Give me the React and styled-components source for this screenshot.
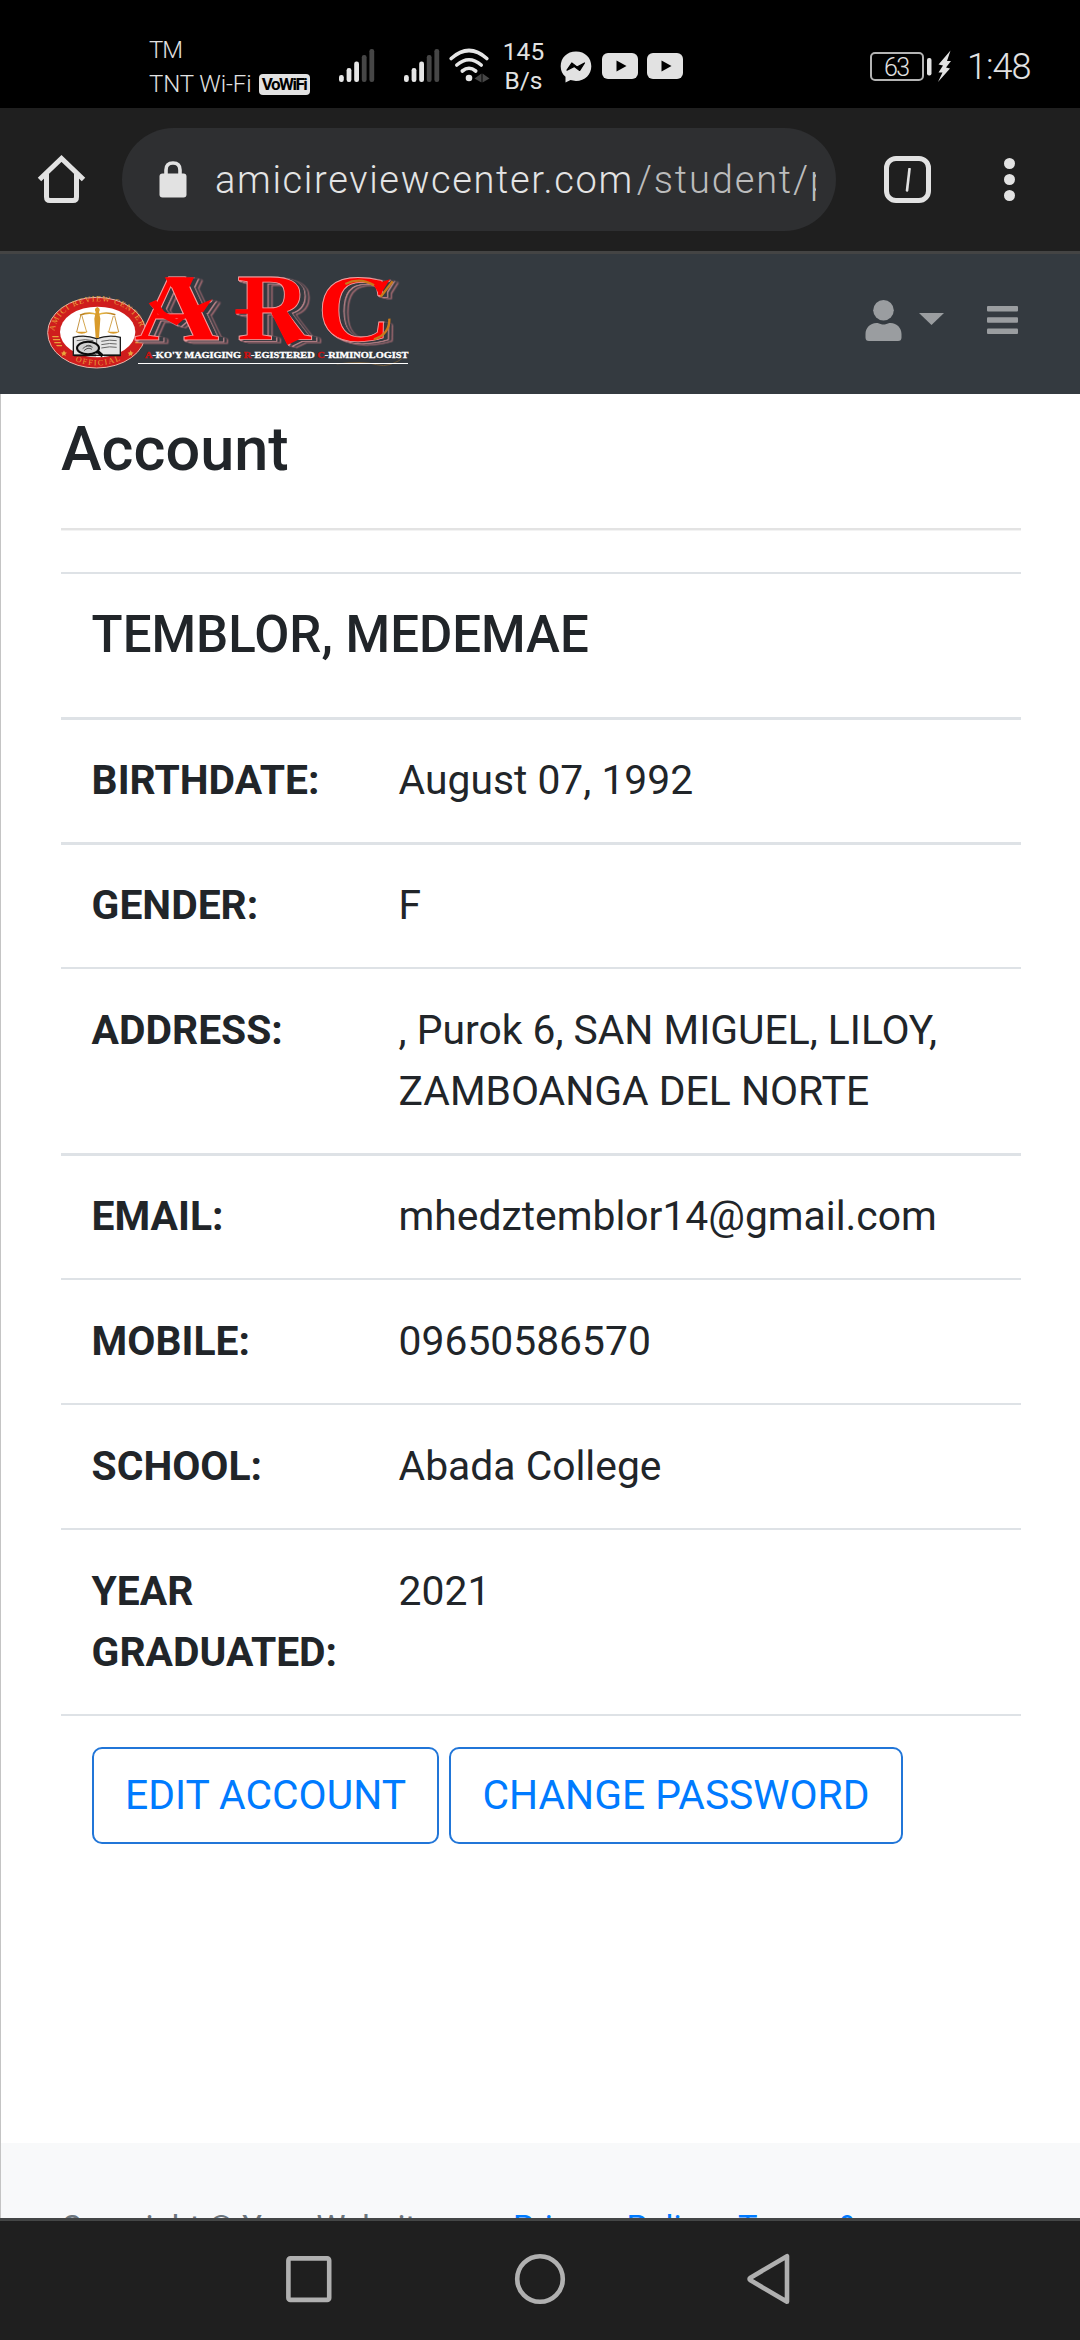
import React from "react";
import styled, { createGlobalStyle } from "styled-components";

const GlobalStyle = createGlobalStyle`
  *, *::before, *::after { box-sizing: border-box; }
  html, body { margin: 0; padding: 0; background: #fff; }
  body { font-family: Roboto, "Noto Sans", sans-serif; color: #212529; }
  h1, h2, p, dl, dt, dd { margin: 0; }
  svg { display: block; flex: none; }
`;

const Screen = styled.div`
  width: 1080px;
  height: 2340px;
  overflow: hidden;
  display: flex;
  flex-direction: column;
`;

/* Status bar */
const StatusBar = styled.div`
  flex: none;
  height: 108px;
  background: #000;
  color: #e2e2e2;
  display: flex;
  align-items: flex-start;
  padding: 33px 48px 0 149px;
`;
const Carriers = styled.div`
  width: 190px;
  font-size: 24px;
  font-weight: 300;
  line-height: 34px;
  white-space: nowrap;
`;
const CarrierLine = styled.div`
  display: flex;
  align-items: center;
  letter-spacing: ${(p) => p.$spacing}px;
`;
const VoBadge = styled.span`
  display: flex;
  align-items: center;
  justify-content: center;
  width: 51px;
  height: 21px;
  margin-left: 7px;
  border-radius: 4px;
  background: #e2e2e2;
  color: #000;
  font-size: 17px;
  font-weight: 700;
  line-height: 21px;
  letter-spacing: -1.5px;
`;
const StatusIcon = styled.svg`
  margin-top: ${(p) => p.$top}px;
  margin-left: ${(p) => p.$left || 0}px;
`;
const Speed = styled.div`
  width: 54px;
  margin-left: 7px;
  margin-right: 1px;
  margin-top: 5px;
  font-size: 24.5px;
  line-height: 28.5px;
  text-align: center;
`;
const Clock = styled.div`
  margin-left: 15px;
  margin-top: 14px;
  font-size: 36px;
  font-weight: 300;
  line-height: 40px;
  width: 65px;
  letter-spacing: -1px;
  white-space: nowrap;
`;
const Push = styled.div`
  flex: 1;
`;

/* Browser toolbar */
const Toolbar = styled.div`
  flex: none;
  height: 146px;
  background: #1f1f1f;
  border-bottom: 3px solid #444;
  display: flex;
  align-items: center;
  padding: 0 0 0 37px;
`;
const Omnibox = styled.div`
  width: 714px;
  height: 103px;
  margin-left: 36px;
  border-radius: 52px;
  background: #2e2f31;
  display: flex;
  align-items: center;
  padding-left: 37px;
`;
const Url = styled.div`
  width: 601px;
  margin-left: 28px;
  overflow: hidden;
  white-space: nowrap;
  font-size: 38px;
  font-weight: 300;
  line-height: 54px;
  color: #e4e4e4;
  letter-spacing: 1.66px;
`;
const UrlPath = styled.span`
  color: #bcbcbc;
  margin-left: 3px;
  letter-spacing: 1.85px;
`;
const TabCount = styled.div`
  width: 47px;
  height: 47px;
  margin-left: 48px;
  border: 5px solid #e2e2e2;
  border-radius: 12px;
  color: #e2e2e2;
  display: flex;
  align-items: center;
  justify-content: center;
`;
const Dots = styled.div`
  margin-left: 73px;
  display: flex;
  flex-direction: column;
  gap: 4.6px;
`;
const Dot = styled.span`
  width: 11px;
  height: 11px;
  border-radius: 50%;
  background: #e2e2e2;
`;

/* Site header */
const SiteHeader = styled.header`
  flex: none;
  height: 140px;
  background: #343a40;
  display: flex;
  align-items: flex-start;
  padding: 16px 62px 0 44px;
`;
const HeaderIcon = styled.svg`
  fill: #9a9da0;
  margin-top: ${(p) => p.$top}px;
  margin-left: ${(p) => p.$left || 0}px;
`;
const LogoArt = styled.svg`
  overflow: visible;
  font-family: "Liberation Serif", serif;
`;
/* Letter face with two thin offset contours to its right. */
const LetterFace = styled.g`
  fill: #f00;
  stroke: #f3a0a0;
  stroke-width: 2.5;
  font-weight: 700;
  font-size: 284px;
  filter: drop-shadow(13px 3px 0 #343a40) drop-shadow(3px 2px 0 #e59aa0)
    drop-shadow(8px 2px 0 #343a40) drop-shadow(3px 2px 0 #c97a82);
`;

/* Page */
const Page = styled.main`
  flex: none;
  height: 1824px;
  overflow: hidden;
  border-left: 1px solid #c4c4c4;
  background: #fff;
  display: flex;
  flex-direction: column;
`;
const Content = styled.section`
  flex: none;
  height: 1749px;
  padding: 19.4px 59px 0 60px;
`;
const Title = styled.h1`
  font-size: 61.2px;
  font-weight: 500;
  line-height: 73.6px;
`;
const Rule = styled.hr`
  height: 3px;
  margin: 41px 0;
  border: 0;
  border-top: 2px solid #e3e3e3;
  background: #f3f3f3;
`;
const NameRow = styled.h2`
  height: 145px;
  border-top: 2px solid #dee2e6;
  padding: 30px 30.6px;
  font-size: 51px;
  font-weight: 500;
  line-height: 61px;
`;
const Row = styled.dl`
  display: grid;
  grid-template-columns: 307px 1fr;
  border-top: ${(p) => (p.$thick ? 3 : 2)}px solid #dee2e6;
  padding: ${(p) => (p.$thick ? 30 : 31)}px 0 31px;
  font-size: 40.8px;
  line-height: 61px;
`;
const Label = styled.dt`
  padding: 0 30.6px;
  font-weight: 700;
`;
const Value = styled.dd`
  padding: 0 30.6px;
`;
const Actions = styled.div`
  border-top: 2px solid #dee2e6;
  padding: 31px 31px;
  display: flex;
  gap: 10px;
`;
const OutlineButton = styled.button`
  width: ${(p) => p.$width}px;
  height: 97px;
  padding: 0;
  border: 2px solid #2176d8;
  border-radius: 10px;
  background: transparent;
  color: #007bff;
  font-family: inherit;
  font-size: 40.8px;
  line-height: 61px;
  white-space: nowrap;
`;
const Footer = styled.footer`
  flex: 1;
  background: #f8f9fa;
  padding: 61px 60px 0 60px;
  display: flex;
  font-size: 32.64px;
  line-height: 49px;
  color: #6c757d;
  white-space: nowrap;
  overflow: hidden;
`;
const Copyright = styled.div`
  width: 452px;
`;
const FooterLink = styled.a`
  color: #007bff;
`;

/* System navigation */
const NavBar = styled.nav`
  flex: 1;
  border-top: 3px solid #444646;
  background: #1f1f1f;
  display: flex;
  align-items: flex-start;
  padding: 32px 0 0 283px;
`;
const NavIcon = styled.svg`
  fill: none;
  stroke: #b0b0b0;
  stroke-width: 4.6;
  stroke-linejoin: round;
  margin-left: ${(p) => p.$left || 0}px;
`;

function Signal({ left }) {
  const tops = [26, 19, 12.5, 6, 0];
  return (
    <StatusIcon $top={16} $left={left} width="36" height="34">
      {tops.map((t, i) => (
        <rect key={i} x={i * 7.6} y={t} width="4.8" height={33 - t} rx="2.2" fill={i < 3 ? "#e6e6e6" : "#464646"} />
      ))}
    </StatusIcon>
  );
}

function YouTube({ left }) {
  return (
    <StatusIcon $top={20} $left={left} width="36" height="26" viewBox="0 0 36 26">
      <rect width="36" height="26" rx="6" fill="#e2e2e2" />
      <path d="M14.5 7.5 24.5 13 14.5 18.5Z" fill="#000" />
    </StatusIcon>
  );
}

function Logo() {
  return (
    <LogoArt width="375" height="100" viewBox="42 60 1125 300">
      <defs>
        <path id="sealTop" d="M72 262C72 118 334 118 334 262" />
        <path id="sealBottom" d="M112 322Q204 372 296 318" />
        <linearGradient id="gold" x1="0" x2="1">
          <stop offset="0" stopColor="#b5791a" />
          <stop offset=".5" stopColor="#f1c34a" />
          <stop offset="1" stopColor="#b5791a" />
        </linearGradient>
      </defs>
      <ellipse cx="200" cy="248" rx="147" ry="106" fill="#cf1d1d" stroke="#e9b4a8" strokeWidth="3" />
      <ellipse cx="203" cy="246" rx="113" ry="76" fill="#fff" />
      <text fontSize="24" fill="#e8a33c">
        <textPath href="#sealTop" startOffset="18" textLength="330">AMICI REVIEW CENTER</textPath>
      </text>
      <text fontSize="24" fill="#e8a33c">
        <textPath href="#sealBottom" startOffset="26" textLength="140">OFFICIAL</textPath>
      </text>
      <g fill="#e8a33c">
        <path d="M102 301l3 6 6 1-5 4 1 6-5-3-6 3 1-6-4-4 6-1zM302 301l3 6 6 1-5 4 1 6-5-3-6 3 1-6-4-4 6-1z" />
        <path d="M66 258h20v4H68zM68 267h22v4H70zM72 276h20v4H74zM78 285h18v4H81zM320 267h18v4h-19zM316 276h20v4h-20z" />
      </g>
      <path d="M130 262q36-9 70 4q36-13 71-4v54h-141z" fill="#e5e5e5" stroke="#1c1c1c" strokeWidth="4" />
      <path d="M200 266v47M214 274q26-6 46-2M214 284q26-6 46-2M214 294q26-6 46-2M140 272q26-6 50 0" fill="none" stroke="#666" strokeWidth="3" />
      <path d="M132 316h66M222 316h50" stroke="#111" strokeWidth="5" />
      <ellipse cx="174" cy="294" rx="33" ry="19" fill="#d0d0d0" stroke="#0b0b0b" strokeWidth="6" />
      <path d="M158 296q14-14 30-4M162 302q12-12 24-4M168 288q8-4 16 0" fill="none" stroke="#555" strokeWidth="3" />
      <path d="M202 304l16 14" stroke="#0b0b0b" strokeWidth="10" />
      <g fill="none" stroke="url(#gold)" strokeWidth="5">
        <path d="M150 196q26-12 52-2q26-10 54 0" />
        <path d="M152 198l-12 48M156 198l14 48M250 198l-14 48M254 198l12 48" strokeWidth="2.5" />
      </g>
      <path d="M197 186q-6-10 5-15q11 5 5 15l4 20-4 58h-10l-4-58z" fill="#d99b2b" />
      <path d="M136 245h38q-19 12-38 0zM231 245h38q-19 12-38 0z" fill="#d99b2b" />
      <LetterFace>
        <text x="312" y="271" textLength="256" lengthAdjust="spacingAndGlyphs">A</text>
        <path d="M404 82H492L478 112H424Z" stroke="none" />
        <path d="M356 160L378 150L402 184L440 208L498 168L546 148L520 186L480 192L440 226L392 200Z" stroke="none" />
      </LetterFace>
      <LetterFace>
        <text x="620" y="271" textLength="222" lengthAdjust="spacingAndGlyphs">R</text>
        <path d="M616 178H656V191H616ZM724 190L770 182L820 262L772 285Z" stroke="none" />
      </LetterFace>
      <LetterFace>
        <text x="862" y="272" textLength="222" lengthAdjust="spacingAndGlyphs">C</text>
        <path d="M1030 104L1080 88L1050 136Z" stroke="none" />
      </LetterFace>
      <path d="M946 102q44-22 86 4M1052 140l36-46M1078 206q2 46-46 62" fill="none" stroke="#c87a1c" strokeWidth="7" />
      <path d="M920 342q80-10 120 2t90-28" fill="none" stroke="#8a6a3c" strokeWidth="3" opacity=".7" />
      <text x="345" y="325" textLength="790" lengthAdjust="spacingAndGlyphs" fontWeight="700" fontSize="27" fill="#fff" stroke="#fff" strokeWidth="1">
        <tspan fill="#d01010" stroke="#d01010">A</tspan>-KO'Y MAGIGING <tspan fill="#d01010" stroke="#d01010">R</tspan>-EGISTERED <tspan fill="#d01010" stroke="#d01010">C</tspan>-RIMINOLOGIST
      </text>
      <path d="M324 340.5H1134" stroke="#fff" strokeWidth="3.5" />
    </LogoArt>
  );
}

const details = [
  { label: "BIRTHDATE:", value: "August 07, 1992", thick: true },
  { label: "GENDER:", value: "F", thick: true },
  { label: "ADDRESS:", value: ", Purok 6, SAN MIGUEL, LILOY, ZAMBOANGA DEL NORTE" },
  { label: "EMAIL:", value: "mhedztemblor14@gmail.com", thick: true },
  { label: "MOBILE:", value: "09650586570" },
  { label: "SCHOOL:", value: "Abada College" },
  { label: "YEAR GRADUATED:", value: "2021" },
];

export default function App() {
  return (
    <Screen>
      <GlobalStyle />
      <StatusBar>
        <Carriers>
          <CarrierLine $spacing={-1}>TM</CarrierLine>
          <CarrierLine $spacing={-0.1}>
            TNT Wi-Fi<VoBadge>VoWiFi</VoBadge>
          </CarrierLine>
        </Carriers>
        <Signal />
        <Signal left={28.5} />
        <StatusIcon $top={15} $left={9} width="41" height="35" viewBox="0 0 41 35">
          <g fill="none" stroke="#e6e6e6" strokeWidth="3.6" strokeLinecap="round">
            <path d="M2.2 10.5Q20 -5.5 37.8 10.5" />
            <path d="M7.8 17Q20 6.5 32.2 17" />
            <path d="M13.3 23Q20 17.5 26.7 23" />
          </g>
          <circle cx="20" cy="30" r="3.3" fill="#e6e6e6" />
          <path d="M25.5 30.5l7-5v9zM33.5 25.5v9l7-4z" fill="#464646" />
        </StatusIcon>
        <Speed>145 B/s</Speed>
        <StatusIcon $top={18} $left={8} width="32" height="32" viewBox="0 0 32 32">
          <path d="M16 .5C7 .5.7 6.800.7 15.200c0 4.400 1.700 8 4.800 10.600V31.500l5-2.400c1.700.5 3.500.8 5.500.8 9 0 15.300-6.300 15.300-14.700S25 .5 16 .5Z" fill="#e2e2e2" />
          <path d="M7 19.200l4.800-7.200 5.200 4 7.500-4-4.800 7.400-5.400-4z" fill="#000" stroke="#000" strokeWidth="1.200" strokeLinejoin="round" />
        </StatusIcon>
        <YouTube left={10} />
        <YouTube left={9} />
        <Push />
        <StatusIcon $top={17} width="83" height="34" viewBox="0 0 83 34">
          <rect x="2" y="3" width="52" height="27" rx="4" fill="none" stroke="#b4b4b4" strokeWidth="2" />
          <text x="15" y="25.500" fontFamily="Roboto, sans-serif" fontWeight="300" fontSize="25" fill="#e2e2e2" textLength="26">63</text>
          <rect x="58" y="8" width="4.500" height="17.500" rx="2" fill="#e2e2e2" />
          <path d="M81.500 0.500L69.500 14.500l4.500 1-4.500 7h4l-4.500 9.500L81 18.500l-4-1 5-6.500h-4z" fill="#e2e2e2" />
        </StatusIcon>
        <Clock>1:48</Clock>
      </StatusBar>

      <Toolbar>
        <svg width="49" height="49" viewBox="0 0 49 49">
          <path d="M2.500 24.500 24.500 3.500 46.500 24.500M9.500 19V42Q9.500 45.500 13 45.500H36Q39.500 45.500 39.500 42V19" fill="none" stroke="#e2e2e2" strokeWidth="5" />
        </svg>
        <Omnibox>
          <svg width="28" height="37" viewBox="0 0 28 37">
            <rect x="0.500" y="12.500" width="27" height="24" rx="3" fill="#e2e2e2" />
            <path d="M7 13V9Q7 2 14 2T21 9V13" fill="none" stroke="#e2e2e2" strokeWidth="3.600" />
          </svg>
          <Url>
            amicireviewcenter.com<UrlPath>/student/p</UrlPath>
          </Url>
        </Omnibox>
        <TabCount>
          <svg width="6" height="24" viewBox="0 0 6 24">
            <path d="M4.500 1 2 22.500" stroke="#e2e2e2" strokeWidth="2.600" strokeLinecap="round" />
          </svg>
        </TabCount>
        <Dots>
          <Dot />
          <Dot />
          <Dot />
        </Dots>
      </Toolbar>

      <SiteHeader>
        <Logo />
        <Push />
        <HeaderIcon $top={30} width="37" height="41" viewBox="0 0 37 41">
          <circle cx="18.500" cy="10.300" r="10.300" />
          <path d="M11.500 23C14.500 23 15 24.500 18.500 24.500S22.500 23 25.500 23C32 23 36.500 28 36.500 34V37.500Q36.500 41 33 41H4Q.5 41 .5 37.500V34C.5 28 5 23 11.500 23Z" />
        </HeaderIcon>
        <HeaderIcon $top={43} $left={17} width="25" height="12" viewBox="0 0 25 12">
          <path d="M0 0H25L12.500 12Z" />
        </HeaderIcon>
        <HeaderIcon $top={36} $left={43} width="31" height="28" viewBox="0 0 31 28">
          <rect width="31" height="5.500" rx="1" />
          <rect y="11.200" width="31" height="5.500" rx="1" />
          <rect y="22.400" width="31" height="5.500" rx="1" />
        </HeaderIcon>
      </SiteHeader>

      <Page>
        <Content>
          <Title>Account</Title>
          <Rule />
          <NameRow>TEMBLOR, MEDEMAE</NameRow>
          {details.map((d) => (
            <Row key={d.label} $thick={d.thick}>
              <Label>{d.label}</Label>
              <Value>{d.value}</Value>
            </Row>
          ))}
          <Actions>
            <OutlineButton $width={347}>EDIT ACCOUNT</OutlineButton>
            <OutlineButton $width={454}>CHANGE PASSWORD</OutlineButton>
          </Actions>
        </Content>
        <Footer>
          <Copyright>Copyright © Your Website</Copyright>
          <div>
            <FooterLink>Privacy Policy</FooterLink> · <FooterLink>Terms &amp;</FooterLink>
          </div>
        </Footer>
      </Page>

      <NavBar>
        <NavIcon width="52" height="52" viewBox="0 0 52 52">
          <rect x="5.400" y="5.400" width="40.800" height="41.500" rx="2" />
        </NavIcon>
        <NavIcon $left={179} width="52" height="52" viewBox="0 0 52 52">
          <circle cx="26" cy="26" r="22.800" />
        </NavIcon>
        <NavIcon $left={177} width="52" height="52" viewBox="0 0 52 52">
          <path d="M7.500 24.700 44 3.200V48.800L7.500 27.300Q5.500 26 7.500 24.700Z" />
        </NavIcon>
      </NavBar>
    </Screen>
  );
}
